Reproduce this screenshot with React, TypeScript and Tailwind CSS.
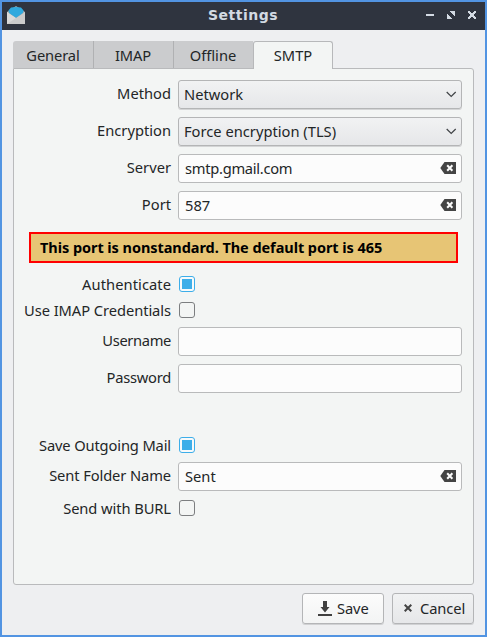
import type { ReactNode } from "react";

function MailIcon() {
  return (
    <svg width="20" height="20" viewBox="0 0 20 20" className="shrink-0">
      <path d="M1 6 L10 0 L19 6 V18 H1Z" fill="#a9adb0" />
      <path d="M1 6 L10 12 L19 6 V18 H1Z" fill="#cbcbcb" />
      <path d="M1 6 L10 12 L1 18Z" fill="#dadada" />
      <path d="M5 1.6 Q10 0.4 15 1.6 L17.6 4.6 Q17.4 7 15.5 8 L10 11.8 L4.5 8 Q2.6 7 2.4 4.6Z" fill="#30a9de" />
    </svg>
  );
}

function ClearIcon() {
  return (
    <svg width="16" height="12" viewBox="0 0 16 12" className="mb-px shrink-0">
      <path d="M0.3 6 L4.5 0 H16 V12 H4.5Z" fill="#444444" />
      <path d="M7.2 3.2 L12.4 8.8 M12.4 3.2 L7.2 8.8" stroke="#fcfcfc" strokeWidth="2" />
    </svg>
  );
}

function Row({ label, track = "pb-[2px]", gap = "", children }: { label: string; track?: string; gap?: string; children: ReactNode }) {
  return (
    <div className={`flex items-center gap-[7px] ${gap}`}>
      <div className={`w-[157px] shrink-0 whitespace-nowrap text-right leading-[27px] ${track}`}>{label}</div>
      {children}
    </div>
  );
}

function Field({ value = "", track = "", clear = false }: { value?: string; track?: string; clear?: boolean }) {
  return (
    <div className="flex h-[29px] w-[284px] items-center justify-between rounded-[3px] border border-[#b9babb] bg-[#fcfcfc] pl-[6px] pr-[5px]">
      <span className={`leading-[27px] ${track}`}>{value}</span>
      {clear && <ClearIcon />}
    </div>
  );
}

function Select({ value }: { value: string }) {
  return (
    <div className="flex h-[29px] w-[284px] items-center justify-between rounded-[3px] border border-[#b4b5b6] bg-linear-to-b from-[#f1f2f3] to-[#e6e7e9] pl-[5px] pr-[4px] shadow-[0_1px_0_#d3d4d5]">
      <span className="leading-[27px]">{value}</span>
      <svg width="11" height="7" viewBox="0 0 11 7">
        <path d="M0.7 1 L5.2 5.5 L9.7 1" fill="none" stroke="#404346" strokeWidth="1.2" />
      </svg>
    </div>
  );
}

function Check({ on = false }: { on?: boolean }) {
  return on ? (
    <div className="ml-px flex size-4 items-center justify-center rounded-[3px] border border-[#3daee9] bg-[#f7fafb]">
      <div className="size-[10px] bg-[#3daee9]" />
    </div>
  ) : (
    <div className="ml-px size-4 rounded-[3px] border border-[#7c7e80] bg-[#f3f5f4]" />
  );
}

export default function App() {
  return (
    <div className="flex h-[637px] w-[487px] flex-col overflow-hidden border-2 border-[#5294e2] bg-[#eeeff1] font-['Noto_Sans',sans-serif] text-[14.7px] text-[#232627]">
      <header className="flex h-7 shrink-0 items-center bg-[#2f343f] pl-1 pr-[9px] text-[#d3dae3]">
        <MailIcon />
        <h1 className="flex-1 pb-[2px] pl-[34px] text-center font-['DejaVu_Sans',sans-serif] text-[14px] font-bold leading-[24px] tracking-[0.5px]">Settings</h1>
        <svg width="50" height="10" viewBox="0 0 50 10" fill="currentColor" shapeRendering="crispEdges" className="mb-[2px]">
          <path d="M0 4h8v2H0z" />
          <path d="M24 1h5v5h-1v-1h-1v-1h-1v-1h-1v-1h-1zM21 4h1v1h1v1h1v1h1v1h1v1h-5z" />
          <path d="M42 1h2v1h1v1h2v-1h1v-1h2v2h-1v1h-1v2h1v1h1v2h-2v-1h-1v-1h-2v1h-1v1h-2v-2h1v-1h1v-2h-1v-1h-1z" />
        </svg>
      </header>

      <main className="flex flex-col px-[11px] pt-[11px]">
        <nav className="z-10 -mb-px flex h-7 text-center leading-[29px]">
          <div className="mb-px w-[81px] rounded-tl-[3px] border-r border-[#b0b1b3] bg-[#cbccce] tracking-[-0.12px]">General</div>
          <div className="mb-px w-20 border-r border-[#b0b1b3] bg-[#cbccce] pr-px tracking-[-0.1px]">IMAP</div>
          <div className="mb-px w-[79px] bg-[#cbccce] pr-px">Offline</div>
          <div className="w-20 rounded-t-[3px] border border-b-0 border-[#b7b8ba] bg-[#f3f5f4] leading-[27px]">SMTP</div>
        </nav>

        <section className="flex h-[517px] flex-col rounded-b-[3px] rounded-tr-[3px] border border-[#b9babc] bg-[#f3f5f4] pt-[11px]">
          <Row label="Method"><Select value="Network" /></Row>
          <Row label="Encryption" gap="mt-2"><Select value="Force encryption (TLS)" /></Row>
          <Row label="Server" gap="mt-2"><Field value="smtp.gmail.com" track="tracking-[-0.28px]" clear /></Row>
          <Row label="Port" gap="mt-2"><Field value="587" clear /></Row>
          <div className="ml-[15px] mt-3 h-[31px] w-[429px] border-2 border-[#ff0000] bg-[#e7c575] pl-[9px] text-[14.5px] font-bold leading-[27px] tracking-[-0.06px] text-black">
            This port is nonstandard. The default port is 465
          </div>
          <Row label="Authenticate" track="tracking-[0.06px]" gap="mt-[13px] h-4"><Check on /></Row>
          <Row label="Use IMAP Credentials" track="tracking-[-0.06px]" gap="mt-[10px] h-4"><Check /></Row>
          <Row label="Username" track="pb-[2px] tracking-[-0.35px]" gap="mt-[9px]"><Field /></Row>
          <Row label="Password" track="pb-[2px] tracking-[-0.25px]" gap="mt-2"><Field /></Row>
          <Row label="Save Outgoing Mail" track="tracking-[-0.14px]" gap="mt-[44px] h-4"><Check on /></Row>
          <Row label="Sent Folder Name" track="pb-[2px] tracking-[-0.1px]" gap="mt-[9px]"><Field value="Sent" clear /></Row>
          <Row label="Send with BURL" track="tracking-[-0.08px]" gap="mt-[9px] h-4"><Check /></Row>
        </section>

        <footer className="mt-2 flex justify-end gap-2">
          <button className="flex h-[31px] w-[82px] items-center rounded-[3px] border border-[#b4b5b7] bg-linear-to-b from-[#fcfcfc] to-[#f3f4f4] pl-[15px] shadow-[0_1px_0_#d0d1d3]">
            <svg width="14" height="15" viewBox="0 0 14 15" fill="#404040" className="mr-[5px]">
              <path d="M5 0h4v6h2.5L7 11.5 2.5 6H5zM0 13h14v2H0z" />
            </svg>
            <span className="tracking-[-0.1px]">Save</span>
          </button>
          <button className="flex h-[31px] w-[82px] items-center rounded-[3px] border border-[#b4b5b7] bg-linear-to-b from-[#f1f2f3] to-[#e6e7e9] pl-[11px] shadow-[0_1px_0_#d0d1d3]">
            <svg width="8" height="8" viewBox="0 0 8 8" className="-mt-[2px] mr-2">
              <path d="M0.7 0.7 L7.3 7.3 M7.3 0.7 L0.7 7.3" stroke="#444444" strokeWidth="2" />
            </svg>
            <span className="tracking-[-0.1px]">Cancel</span>
          </button>
        </footer>
      </main>
    </div>
  );
}
